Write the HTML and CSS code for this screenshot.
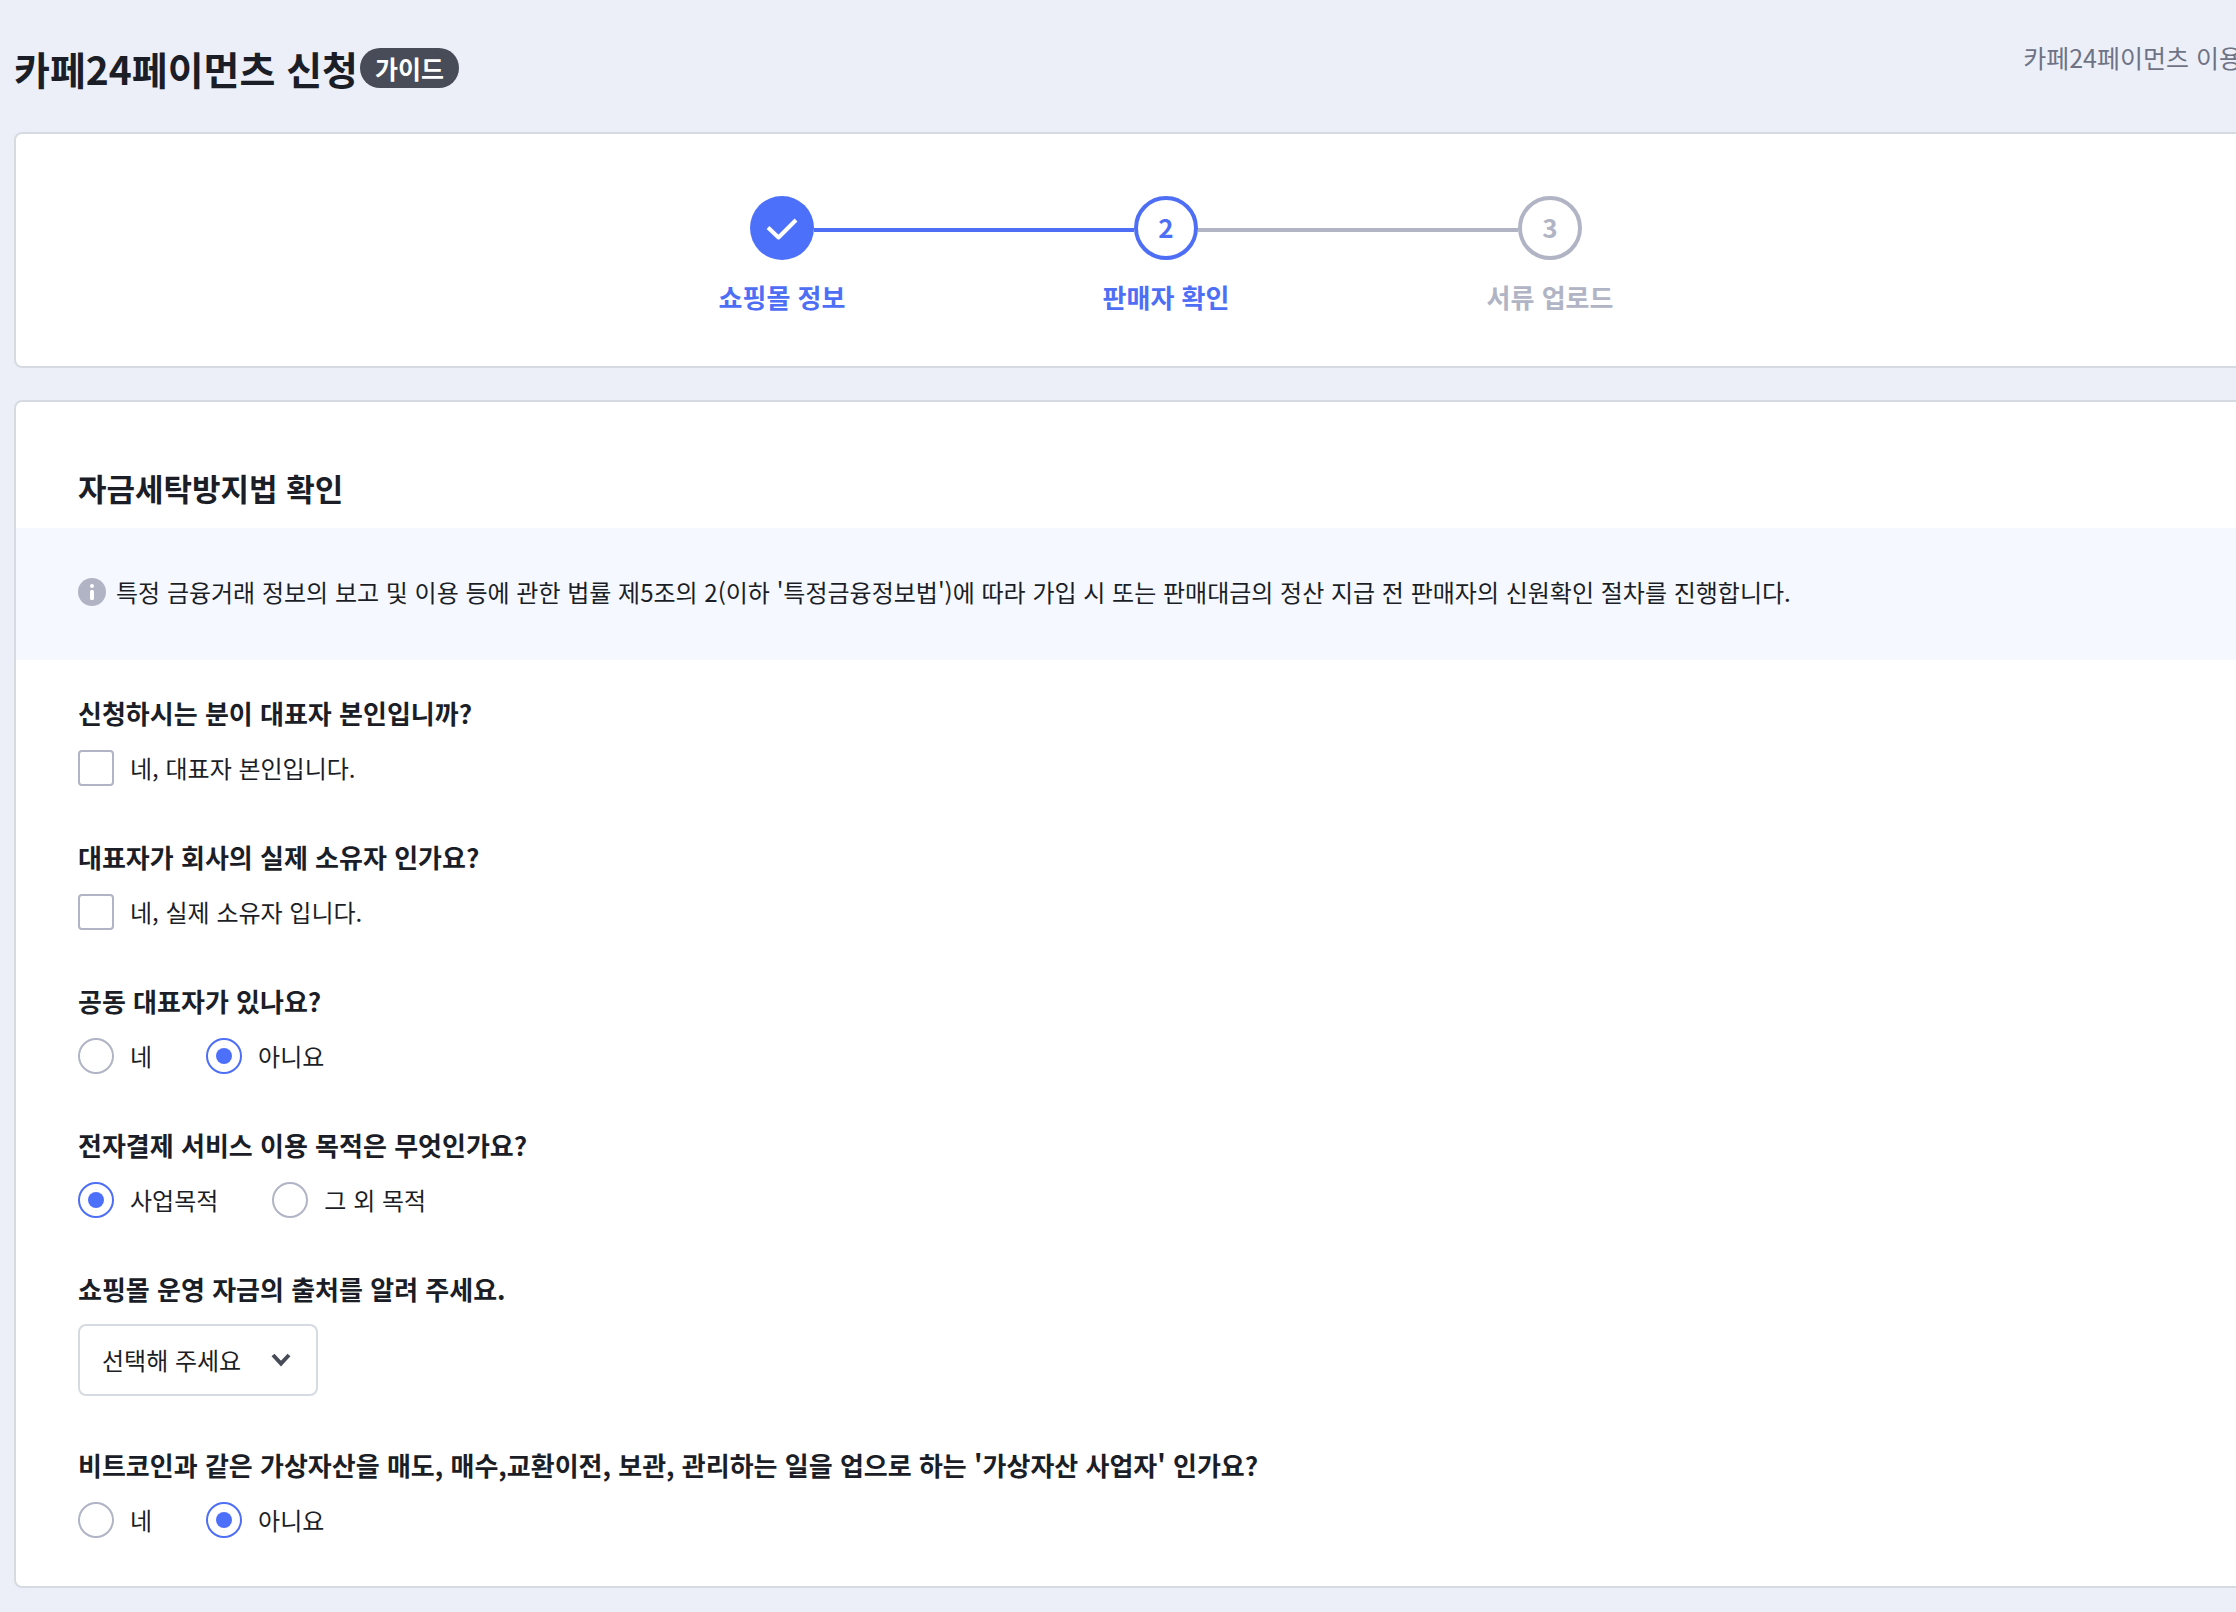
FILE: index.html
```html
<!DOCTYPE html>
<html lang="ko">
<head>
<meta charset="utf-8">
<title>카페24페이먼츠 신청</title>
<link rel="stylesheet" href="styles.css">
</head>
<body>
<div class="page">
  <header class="page-header">
    <h1 class="page-title">카페24페이먼츠 신청</h1>
    <button type="button" class="guide">가이드</button>
    <a class="terms" href="#">카페24페이먼츠 이용</a>
  </header>

  <ol class="card steps">
    <li class="step done">
      <div class="track">
        <span class="line hidden"></span>
        <span class="circle"><svg viewBox="0 0 64 64" width="64" height="64" aria-hidden="true"><path d="M18 31.500L28.500 41.500L46 24"/></svg></span>
        <span class="line"></span>
      </div>
      <span class="step-label">쇼핑몰 정보</span>
    </li>
    <li class="step current">
      <div class="track">
        <span class="line"></span>
        <span class="circle">2</span>
        <span class="line ahead"></span>
      </div>
      <span class="step-label">판매자 확인</span>
    </li>
    <li class="step">
      <div class="track">
        <span class="line ahead"></span>
        <span class="circle">3</span>
        <span class="line hidden"></span>
      </div>
      <span class="step-label">서류 업로드</span>
    </li>
  </ol>

  <main class="card">
    <h2 class="section-title">자금세탁방지법 확인</h2>
    <div class="notice">
      <svg class="info" viewBox="0 0 28 28" width="28" height="28" aria-hidden="true"><circle class="disc" cx="14" cy="14" r="14"/><circle cx="14" cy="8" r="2"/><rect x="12" y="12" width="4" height="10" rx="1.500"/></svg>
      <p>특정 금융거래 정보의 보고 및 이용 등에 관한 법률 제5조의 2(이하 '특정금융정보법')에 따라 가입 시 또는 판매대금의 정산 지급 전 판매자의 신원확인 절차를 진행합니다.</p>
    </div>
    <form class="questions">
      <fieldset>
        <legend>신청하시는 분이 대표자 본인입니까?</legend>
        <div class="options">
          <label><input type="checkbox" name="self">네, 대표자 본인입니다.</label>
        </div>
      </fieldset>
      <fieldset>
        <legend>대표자가 회사의 실제 소유자 인가요?</legend>
        <div class="options">
          <label><input type="checkbox" name="owner">네, 실제 소유자 입니다.</label>
        </div>
      </fieldset>
      <fieldset>
        <legend>공동 대표자가 있나요?</legend>
        <div class="options">
          <label><input type="radio" name="joint">네</label>
          <label><input type="radio" name="joint" checked>아니요</label>
        </div>
      </fieldset>
      <fieldset>
        <legend>전자결제 서비스 이용 목적은 무엇인가요?</legend>
        <div class="options">
          <label><input type="radio" name="purpose" checked>사업목적</label>
          <label><input type="radio" name="purpose">그 외 목적</label>
        </div>
      </fieldset>
      <div class="question">
        <label class="question-title" for="funds">쇼핑몰 운영 자금의 출처를 알려 주세요.</label>
        <div class="select">
          <select id="funds"><option>선택해 주세요</option></select>
          <svg viewBox="0 0 20 14" width="20" height="14" aria-hidden="true"><path d="M2 2L10 10.500L18 2"/></svg>
        </div>
      </div>
      <fieldset>
        <legend>비트코인과 같은 가상자산을 매도, 매수,교환이전, 보관, 관리하는 일을 업으로 하는 '가상자산 사업자' 인가요?</legend>
        <div class="options">
          <label><input type="radio" name="crypto">네</label>
          <label><input type="radio" name="crypto" checked>아니요</label>
        </div>
      </fieldset>
    </form>
  </main>
</div>
</body>
</html>
```
FILE: styles.css
```css
:root {
  --blue: #4e6ff5;
  --gray: #b0b4c4;
  --text: #1b1e26;
  --line: #d6dbe1;
}

* {
  box-sizing: border-box;
}

body {
  margin: 0;
  background: #eceff8;
  color: var(--text);
  font-family: "Noto Sans CJK KR", sans-serif;
  font-size: 24px;
  line-height: 38px;
  overflow-x: hidden;
}

.page {
  min-width: 2318px;
  padding: 0 0 24px 14px;
}

.page-header {
  display: flex;
  align-items: center;
  gap: 2px;
  height: 132px;
  padding: 4px 76px 0 0;
}

.page-title {
  margin: 0;
  font-size: 39px;
  line-height: 56px;
  font-weight: 700;
}

.guide {
  height: 40px;
  padding: 0 15px;
  border: 0;
  border-radius: 20px;
  background: #474c58;
  color: #fff;
  font: 700 25px/38px "Noto Sans CJK KR", sans-serif;
}

.terms {
  align-self: flex-start;
  margin: 34px 0 0 auto;
  color: #6e7385;
  font-size: 25px;
  text-decoration: none;
}

.card {
  margin: 0 0 32px;
  background: #fff;
  border: 2px solid var(--line);
  border-radius: 8px;
}

.steps {
  display: flex;
  justify-content: center;
  padding: 62px 0 50px;
  list-style: none;
}

.step {
  width: 384px;
  color: var(--gray);
  font-size: 26px;
  font-weight: 700;
  text-align: center;
}

.done,
.current {
  color: var(--blue);
}

.track {
  display: flex;
  align-items: center;
  margin-bottom: 18px;
}

.line {
  flex: 1;
  height: 4px;
  margin-top: 4px;
  background: currentColor;
}

.line.ahead {
  background: var(--gray);
}

.line.hidden {
  visibility: hidden;
}

.circle {
  width: 64px;
  height: 64px;
  border: 4px solid currentColor;
  border-radius: 50%;
  line-height: 54px;
}

.done .circle {
  border: 0;
  background: #4d70fb;
}

.circle svg {
  display: block;
  fill: none;
  stroke: #fff;
  stroke-width: 4;
  stroke-linejoin: round;
}

.step-label {
  display: block;
}

.section-title {
  margin: 0;
  padding: 64px 62px 18px;
  font-size: 31px;
  line-height: 44px;
  font-weight: 700;
}

.notice {
  display: flex;
  align-items: center;
  gap: 10px;
  height: 132px;
  padding: 0 62px 4px;
  background: #f5f8ff;
}

.notice p {
  margin: 0;
}

.info {
  fill: #fff;
}

.disc {
  fill: var(--gray);
}

.questions {
  display: flex;
  flex-direction: column;
  gap: 50px;
  padding: 34px 62px 46px;
}

fieldset {
  min-width: 0;
  margin: 0;
  padding: 0;
  border: 0;
}

legend,
.question-title {
  display: block;
  margin-bottom: 16px;
  padding: 0;
  font-size: 26px;
  font-weight: 700;
}

.options {
  display: flex;
  gap: 54px;
  height: 40px;
}

.options label {
  display: flex;
  align-items: center;
  gap: 16px;
}

input {
  appearance: none;
  width: 36px;
  height: 36px;
  margin: 0;
  border: 2px solid var(--gray);
  border-radius: 4px;
  background: #fff;
}

input[type="radio"] {
  display: grid;
  place-items: center;
  border-radius: 50%;
}

input[type="radio"]:checked {
  border-color: var(--blue);
}

input[type="radio"]:checked::before {
  content: "";
  width: 16px;
  height: 16px;
  border-radius: 50%;
  background: #4d70fb;
}

.select {
  display: grid;
  align-items: center;
  width: 240px;
}

.select select,
.select svg {
  grid-area: 1 / 1;
}

.select select {
  appearance: none;
  height: 72px;
  padding: 0 22px;
  border: 2px solid var(--line);
  border-radius: 8px;
  background: #fff;
  color: inherit;
  font: inherit;
}

.select svg {
  justify-self: end;
  margin-right: 27px;
  fill: none;
  stroke: #474c58;
  stroke-width: 4;
  pointer-events: none;
}
```
